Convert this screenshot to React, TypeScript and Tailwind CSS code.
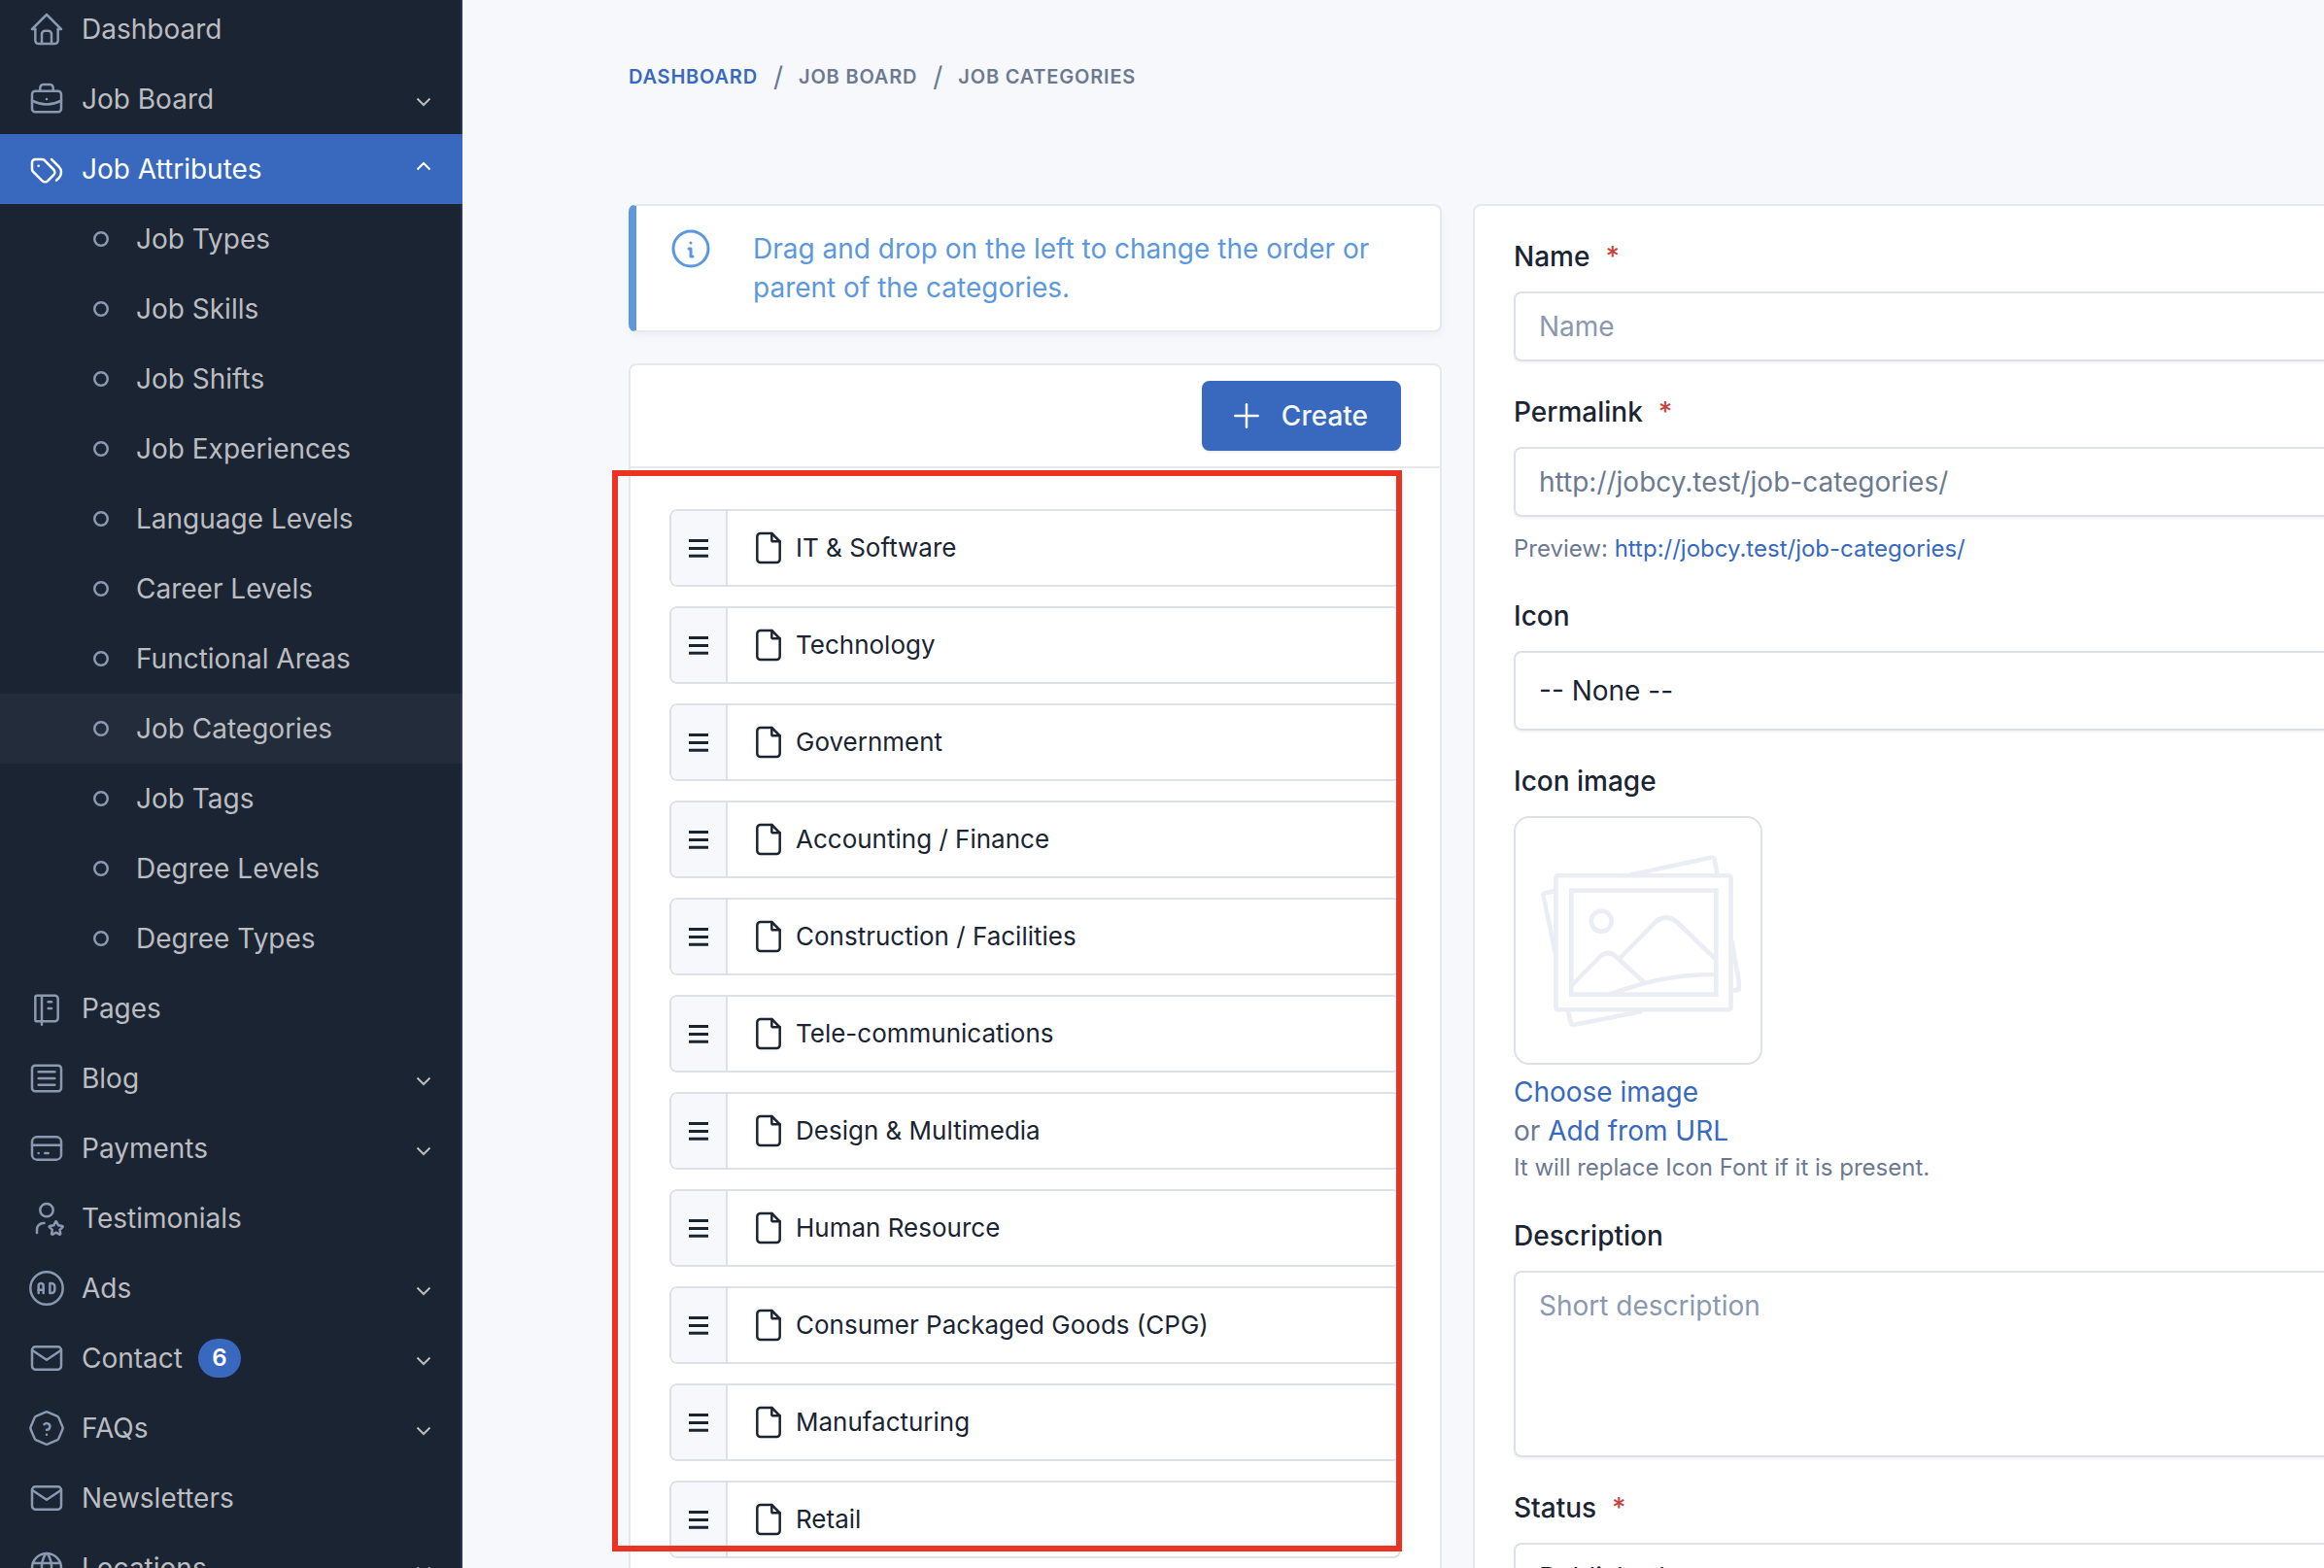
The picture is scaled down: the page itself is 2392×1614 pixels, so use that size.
import type { ComponentType, ReactNode } from "react";
import {
  TbAdCircle,
  TbArticle,
  TbBriefcase,
  TbCreditCard,
  TbFile,
  TbHelpOctagon,
  TbHome,
  TbInfoCircle,
  TbMail,
  TbNotebook,
  TbPlus,
  TbTags,
  TbUserStar,
  TbWorld,
} from "react-icons/tb";
import clsx from "clsx";

type NavEntry = {
  label: string;
  icon: ComponentType<{ size?: number; strokeWidth?: number; className?: string }>;
  badge?: number;
  expandable?: boolean;
  children?: string[];
};

const NAV: NavEntry[] = [
  { label: "Dashboard", icon: TbHome },
  { label: "Job Board", icon: TbBriefcase, expandable: true },
  {
    label: "Job Attributes",
    icon: TbTags,
    expandable: true,
    children: [
      "Job Types",
      "Job Skills",
      "Job Shifts",
      "Job Experiences",
      "Language Levels",
      "Career Levels",
      "Functional Areas",
      "Job Categories",
      "Job Tags",
      "Degree Levels",
      "Degree Types",
    ],
  },
  { label: "Pages", icon: TbNotebook },
  { label: "Blog", icon: TbArticle, expandable: true },
  { label: "Payments", icon: TbCreditCard, expandable: true },
  { label: "Testimonials", icon: TbUserStar },
  { label: "Ads", icon: TbAdCircle, expandable: true },
  { label: "Contact", icon: TbMail, badge: 6, expandable: true },
  { label: "FAQs", icon: TbHelpOctagon, expandable: true },
  { label: "Newsletters", icon: TbMail },
  { label: "Locations", icon: TbWorld, expandable: true },
];

const CURRENT = "Job Categories";

const CATEGORIES = [
  "IT & Software",
  "Technology",
  "Government",
  "Accounting / Finance",
  "Construction / Facilities",
  "Tele-communications",
  "Design & Multimedia",
  "Human Resource",
  "Consumer Packaged Goods (CPG)",
  "Manufacturing",
  "Retail",
];

function Chevron({ open }: { open: boolean }) {
  return (
    <svg className="ml-auto shrink-0" width="16" height="20" viewBox="0 0 16 20" fill="none" stroke="currentColor" strokeWidth="2">
      <path d={open ? "M1.5 10.5 8 4l6.5 6.5" : "M1.5 9.5 8 16l6.5-6.5"} />
    </svg>
  );
}

function NavItem({ entry }: { entry: NavEntry }) {
  const Icon = entry.icon;
  const open = !!entry.children;
  return (
    <li>
      <a
        href="#"
        className={clsx("flex h-[72px] items-center pl-7 pr-8", open ? "bg-[#3869bf] text-white" : "text-[#bbbdc1]")}
      >
        <Icon size={40} strokeWidth={1.5} className={clsx("mr-4 shrink-0", !open && "text-[#8a99b0]")} />
        {entry.label}
        {entry.badge && (
          <span className="ml-4 flex h-10 w-11 items-center justify-center rounded-full bg-[#3869bf] text-2xl font-semibold text-white">
            {entry.badge}
          </span>
        )}
        {entry.expandable && <Chevron open={open} />}
      </a>
      {entry.children && (
        <ul>
          {entry.children.map((child) => (
            <li key={child}>
              <a
                href="#"
                className={clsx("flex h-[72px] items-center gap-7 pl-24 text-[#bbbdc1]", child === CURRENT && "bg-white/4")}
              >
                <svg width="16" height="16" viewBox="0 0 16 16" fill="none" stroke="#8a99b0" strokeWidth="2.5">
                  <circle cx="8" cy="8" r="6.75" />
                </svg>
                {child}
              </a>
            </li>
          ))}
        </ul>
      )}
    </li>
  );
}

function Sidebar() {
  return (
    <aside className="w-[476px] shrink-0 overflow-hidden bg-[#1b2432] shadow-[inset_-2px_0_0_#2a3547]">
      <nav className="-mt-1.5">
        <ul>
          {NAV.map((entry) => (
            <NavItem key={entry.label} entry={entry} />
          ))}
        </ul>
      </nav>
    </aside>
  );
}

function Breadcrumb() {
  return (
    <nav aria-label="Breadcrumb" className="flex h-10 items-center gap-4 text-[#6c7a91]">
      <a href="#" className="text-xl font-semibold uppercase tracking-[0.04em] text-[#3869bf]">Dashboard</a>
      <span>/</span>
      <span className="text-xl font-semibold uppercase tracking-[0.04em]">Job Board</span>
      <span>/</span>
      <span className="text-xl font-semibold uppercase tracking-[0.04em]">Job Categories</span>
    </nav>
  );
}

function CategoryRow({ name }: { name: string }) {
  return (
    <li className="flex h-20 overflow-hidden rounded-lg border-2 border-[#dce1e7] bg-white">
      <button type="button" aria-label={`Move ${name}`} className="flex w-[58px] items-center justify-center border-r-2 border-[#dce1e7] bg-[#f6f8fc]">
        <svg width="20" height="20" viewBox="0 0 20 20" stroke="#1b2432" strokeWidth="3">
          <path d="M0 2.5h20M0 10.5h20M0 18.3h20" />
        </svg>
      </button>
      <a href="#" className="flex flex-1 items-center gap-2 pl-[22px] text-[26px]">
        <TbFile size={40} strokeWidth={1.5} />
        {name}
      </a>
    </li>
  );
}

// ─── Form ────────────────────────────────────────────────────────────────
const CONTROL =
  "block w-full rounded-lg border-2 border-[#dce1e7] bg-white px-6 shadow-[0_2px_2px_rgba(24,36,51,0.05)] placeholder:text-[#8a99b0]";

function Label({ htmlFor, required, children }: { htmlFor: string; required?: boolean; children: ReactNode }) {
  return (
    <label htmlFor={htmlFor} className="mb-4 flex gap-4 font-medium">
      {children}
      {required && <span className="text-[#c9413c]">*</span>}
    </label>
  );
}

function ImagePlaceholder() {
  return (
    <svg width="252" height="252" viewBox="2 2 252 252" fill="none" stroke="#eaedf3" strokeWidth="4.6" strokeLinejoin="round">
      <path d="M120 60.500 204 42.600a2 2 0 0 1 2.400 1.500L209.500 60" />
      <path d="M43 77 32 79.300a2 2 0 0 0-1.500 2.400L43 142" />
      <path d="M224.500 128 231.700 170V178.500L226 180" />
      <path d="M56 201 59 213.500a2 2 0 0 0 2.400 1.500L132 201" />
      <rect x="43.500" y="61.200" width="180" height="138" rx="2" />
      <rect x="59.300" y="76.600" width="149" height="107" strokeLinejoin="miter" />
      <circle cx="90.300" cy="108.300" r="10.500" />
      <path d="M108.500 147 146 109q11-9 22 0L208 147.500" />
      <path d="M60 174 89 144.500q8-7 16 0L135 172" />
      <path d="M97 184C132 172 160 163 208 163" />
    </svg>
  );
}

function CategoryForm() {
  return (
    <form className="flex flex-1 flex-col gap-8 rounded-lg border-2 border-[#e6e8ec] bg-white px-10 py-8">
      <div>
        <Label htmlFor="name" required>Name</Label>
        <input id="name" type="text" placeholder="Name" className={clsx(CONTROL, "h-[72px]")} />
      </div>

      <div>
        <Label htmlFor="permalink" required>Permalink</Label>
        <input
          id="permalink"
          type="text"
          defaultValue="http://jobcy.test/job-categories/"
          className={clsx(CONTROL, "h-[72px] text-[#6c7a91]")}
        />
        <p className="mt-4 text-2xl leading-[34px] text-[#6c7a91]">
          Preview: <a href="#" className="text-[#3869bf]">http://jobcy.test/job-categories/</a>
        </p>
      </div>

      <div>
        <Label htmlFor="icon">Icon</Label>
        <select id="icon" className={clsx(CONTROL, "h-[82px] appearance-none")}>
          <option>-- None --</option>
        </select>
      </div>

      <div>
        <Label htmlFor="icon-image">Icon image</Label>
        <div className="size-64 overflow-hidden rounded-2xl border-2 border-[#dce1e7]">
          <ImagePlaceholder />
        </div>
        <button id="icon-image" type="button" className="mt-2 block text-[#3869bf]">Choose image</button>
        <p className="text-[#6c7a91]">
          or <a href="#" className="text-[#3869bf]">Add from URL</a>
        </p>
        <p className="text-2xl leading-9 text-[#6c7a91]">It will replace Icon Font if it is present.</p>
      </div>

      <div>
        <Label htmlFor="description">Description</Label>
        <textarea id="description" placeholder="Short description" className={clsx(CONTROL, "h-48 resize-none py-[14px]")} />
      </div>

      <div>
        <Label htmlFor="status" required>Status</Label>
        <select id="status" className={clsx(CONTROL, "h-[72px] appearance-none")}>
          <option>Published</option>
        </select>
      </div>
    </form>
  );
}

export default function App() {
  return (
    <div className="flex h-screen overflow-hidden bg-[#f6f8fc] font-['Inter',sans-serif] text-[28px] leading-10 text-[#1b2432]">
      <Sidebar />
      <main className="min-w-0 flex-1 overflow-hidden pl-[171px] pt-[59px]">
        <Breadcrumb />

        <div className="-mr-24 mt-[111px] flex items-start gap-8">
          <div className="flex w-[837px] shrink-0 flex-col gap-8">
            <div
              role="alert"
              className="flex gap-10 rounded-lg border-2 border-l-8 border-[#e6e8ec] border-l-[#5b98de] bg-white py-6 pl-8 pr-10 text-[#5b98de] shadow-[0_4px_8px_rgba(24,36,51,0.04)]"
            >
              <TbInfoCircle size={48} strokeWidth={1.5} className="-mt-1 shrink-0" />
              <p>Drag and drop on the left to change the order or parent of the categories.</p>
            </div>

            <section className="relative rounded-lg border-2 border-[#e6e8ec] bg-white">
              <header className="flex justify-end border-b-2 border-[#e6e8ec] px-10 py-4">
                <button
                  type="button"
                  className="flex h-[72px] items-center gap-4 rounded-lg bg-[#3869bf] pl-[26px] pr-[34px] font-medium text-[#f6f8fc] shadow-[0_2px_2px_rgba(24,36,51,0.08)]"
                >
                  <TbPlus size={40} strokeWidth={1.5} />
                  Create
                </button>
              </header>
              <ul className="flex flex-col gap-5 px-10 pb-10 pt-[42px]">
                {CATEGORIES.map((name) => (
                  <CategoryRow key={name} name={name} />
                ))}
              </ul>
              {/* highlight frame over the sortable tree */}
              <div className="pointer-events-none absolute -left-[19px] right-[39px] top-[108px] h-[1113px] border-[6px] border-[#eb3323]" />
            </section>
          </div>

          <CategoryForm />
        </div>
      </main>
    </div>
  );
}
